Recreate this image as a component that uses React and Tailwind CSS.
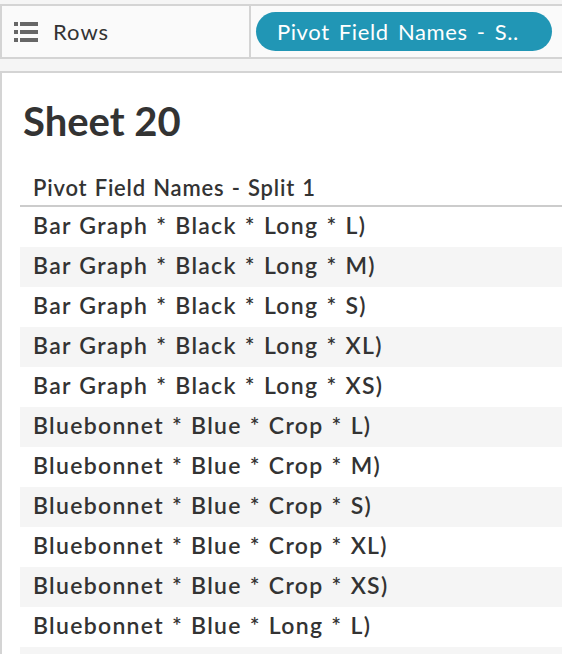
import React from 'react';

const rows = [
  'Bar Graph * Black * Long * L)',
  'Bar Graph * Black * Long * M)',
  'Bar Graph * Black * Long * S)',
  'Bar Graph * Black * Long * XL)',
  'Bar Graph * Black * Long * XS)',
  'Bluebonnet * Blue * Crop * L)',
  'Bluebonnet * Blue * Crop * M)',
  'Bluebonnet * Blue * Crop * S)',
  'Bluebonnet * Blue * Crop * XL)',
  'Bluebonnet * Blue * Crop * XS)',
  'Bluebonnet * Blue * Long * L)',
  'Bluebonnet * Blue * Long * M)',
];

const RowsIcon = () => (
  <svg width="24" height="20" viewBox="0 0 24 20" className="shrink-0">
    <rect x="0" y="0" width="4" height="4" fill="#666" />
    <rect x="6" y="0" width="18" height="4" fill="#666" />
    <rect x="0" y="8" width="4" height="4" fill="#666" />
    <rect x="6" y="8" width="18" height="4" fill="#666" />
    <rect x="0" y="16" width="4" height="4" fill="#666" />
    <rect x="6" y="16" width="18" height="4" fill="#666" />
  </svg>
);

export default function App() {
  return (
    <div className="w-full h-[654px] overflow-hidden bg-[#f5f5f5] pt-[4px] font-['Lato','Liberation_Sans',sans-serif]">
      {/* Rows shelf */}
      <div className="flex h-[55px] border-t-2 border-b-2 border-[#d4d4d4]">
        <div className="w-[251px] flex items-center gap-[15px] pl-[12px] bg-[#fafafa] border-l-2 border-r-2 border-[#d4d4d4]">
          <RowsIcon />
          <span className="text-[22px] text-[#333] tracking-[1px]">Rows</span>
        </div>
        <div className="flex-1 flex items-center pl-[5px] bg-[#fafafa]">
          <div className="w-[296px] h-[39px] rounded-full bg-[#2196b5] flex items-center pl-[21px] text-white text-[22px] tracking-[0.6px] [word-spacing:3px] whitespace-nowrap">
            Pivot Field Names - S..
          </div>
        </div>
      </div>

      {/* Sheet */}
      <div className="mt-[12px] h-full bg-white border-t-2 border-l-2 border-[#d4d4d4]">
        <div className="pl-[21px] pt-[24px] text-[40px] font-bold text-[#333] leading-[48px]">Sheet 20</div>
        <div className="ml-[18px] mt-[27px] font-semibold text-[#333] [word-spacing:1px] whitespace-nowrap">
          <div className="h-[35px] flex items-end pb-[6px] pl-[13px] border-b-2 border-[#cccccc] leading-none text-[22px] tracking-[0.8px]">
            Pivot Field Names - Split 1
          </div>
          {rows.map((r, i) => (
            <div
              key={i}
              className={`h-[40px] flex items-center pl-[13px] pb-[3px] text-[23px] tracking-[1.3px] ${i % 2 === 1 ? 'bg-[#f5f5f5]' : 'bg-white'}`}
            >
              {r}
            </div>
          ))}
        </div>
      </div>
    </div>
  );
}
